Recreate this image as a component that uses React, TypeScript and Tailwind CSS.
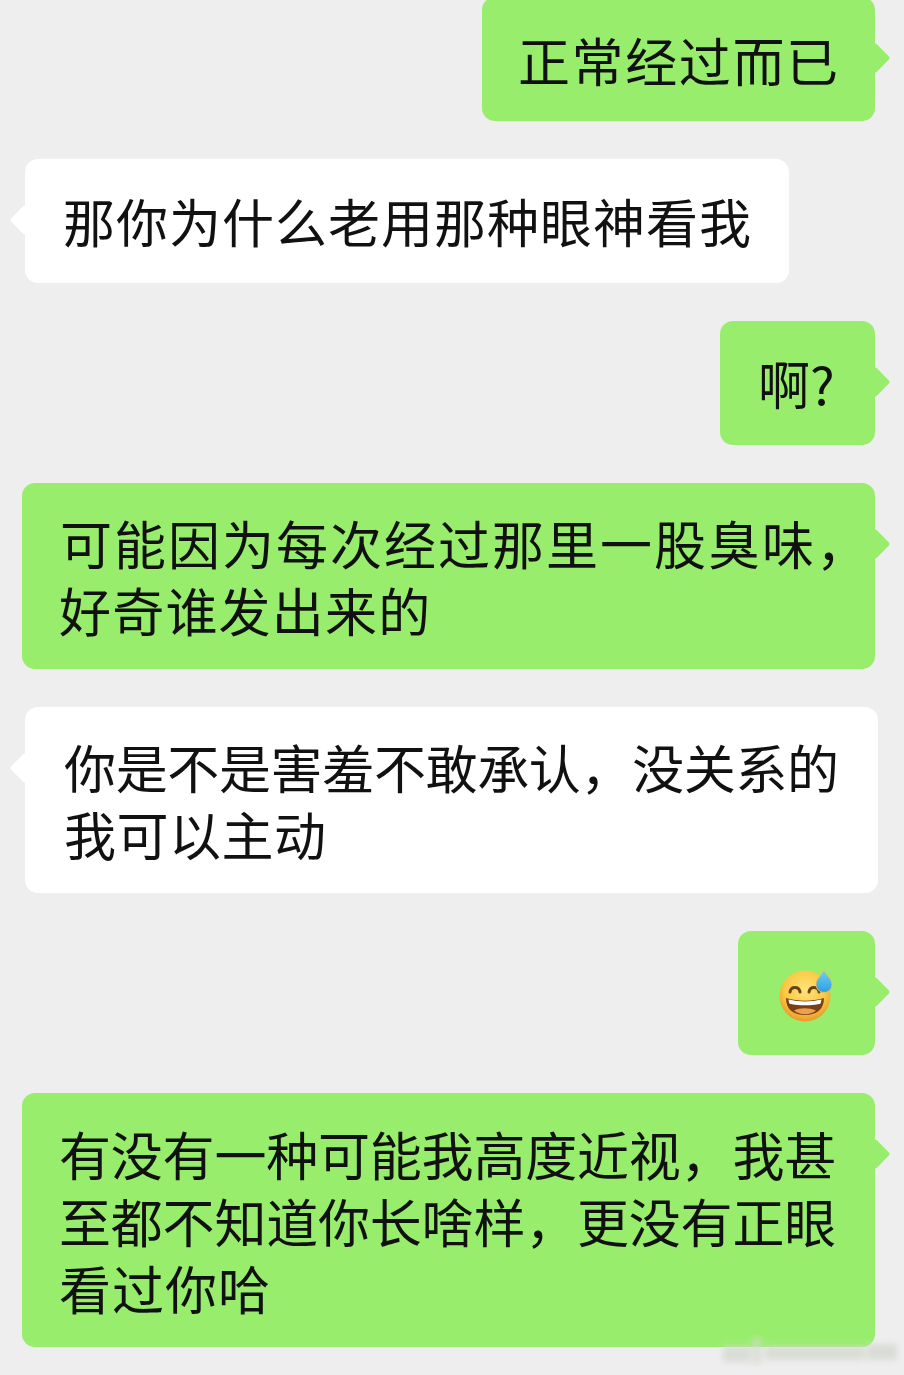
import React from "react";

type Side = "left" | "right";
type Line = { text: string; className: string };

const Bubble = ({ side, lines, children, className = "" }: { side: Side; lines?: Line[]; children?: React.ReactNode; className?: string }) => {
  const isRight = side === "right";
  return (
    <div className={`relative rounded-[13px] ${isRight ? "self-end mr-[29px] bg-[#98ee6c]" : "ml-[25px] bg-white"} ${className}`}>
      <div
        className={`absolute top-[50px] w-[22px] h-[22px] rotate-45 rounded-[3px] ${isRight ? "right-[-11px] bg-[#98ee6c]" : "left-[-11px] bg-white"}`}
      />
      {lines ? (
        <div className="relative whitespace-nowrap">
          {lines.map((line) => (
            <div key={line.text} className={`h-[67px] text-[52px] leading-[67px] ${line.className}`}>
              {line.text}
            </div>
          ))}
        </div>
      ) : (
        children
      )}
    </div>
  );
};

const SweatEmoji = () => (
  <svg width="56" height="56" viewBox="0 0 56 56">
    <defs>
      <radialGradient id="face" cx="50%" cy="38%" r="62%">
        <stop offset="0%" stopColor="#fde37a" />
        <stop offset="65%" stopColor="#fbc943" />
        <stop offset="100%" stopColor="#e8992a" />
      </radialGradient>
      <linearGradient id="drop" x1="0" y1="0" x2="0" y2="1">
        <stop offset="0%" stopColor="#6fd0f5" />
        <stop offset="100%" stopColor="#2f9ee0" />
      </linearGradient>
    </defs>
    <circle cx="26" cy="29" r="25.5" fill="url(#face)" />
    <path d="M11 25c1-6 9-6 10 0" fill="none" stroke="#6b4313" strokeWidth="3" strokeLinecap="round" />
    <path d="M30 25c1-6 9-6 10 0" fill="none" stroke="#6b4313" strokeWidth="3" strokeLinecap="round" />
    <path d="M7 31c12 3.500 26 3.500 38 0 0 12-8 17-19 17S7 43 7 31z" fill="#7b3f16" />
    <path d="M9.500 32.500c10.500 2.500 22.500 2.500 33 0-.3 2-.7 3.200-1.200 4.200-10 2.200-20.500 2.200-30.600 0-.6-1-1-2.200-1.200-4.200z" fill="#fff" />
    <path d="M15 43.500c6-3 15-3 22 0-3 2.500-7 3.800-11 3.800s-8-1.300-11-3.800z" fill="#e9a24f" />
    <path d="M45 3c3 6 8 9 8 14.500a8 8 0 0 1-16 0C37 12 42 9 45 3z" fill="url(#drop)" stroke="#f4c14a" strokeWidth="0.8" />
  </svg>
);

const App = () => {
  return (
    <div
      className="relative flex h-[1375px] w-[904px] flex-col gap-[38px] overflow-hidden bg-[#eeeeee] text-[#111111]"
      style={{ fontFamily: '"Noto Sans CJK SC", "Noto Sans", sans-serif' }}
    >
      <Bubble
        side="right"
        className="-mt-[3px] h-[124px] w-[393px] pt-[29px]"
        lines={[{ text: "正常经过而已", className: "pl-[36px] tracking-[1.6px]" }]}
      />
      <Bubble
        side="left"
        className="h-[124px] w-[764px] pt-[28px]"
        lines={[{ text: "那你为什么老用那种眼神看我", className: "pl-[38px] tracking-[1px]" }]}
      />
      <Bubble side="right" className="h-[124px] w-[155px] pt-[28px]" lines={[{ text: "啊?", className: "pl-[38px]" }]} />
      <Bubble
        side="right"
        className="h-[186px] w-[853px] pt-[26px]"
        lines={[
          { text: "可能因为每次经过那里一股臭味，", className: "pl-[38px] tracking-[2px]" },
          { text: "好奇谁发出来的", className: "pl-[37px] tracking-[1.2px]" },
        ]}
      />
      <Bubble
        side="left"
        className="h-[186px] w-[853px] pt-[26px]"
        lines={[
          { text: "你是不是害羞不敢承认，没关系的", className: "pl-[39px] tracking-[-0.35px]" },
          { text: "我可以主动", className: "pl-[39px] tracking-[0.5px]" },
        ]}
      />
      <Bubble side="right" className="h-[124px] w-[137px]">
        <div className="relative flex h-full items-center justify-center pl-[1px] pt-[4px]">
          <SweatEmoji />
        </div>
      </Bubble>
      <Bubble
        side="right"
        className="h-[254px] w-[853px] pt-[27px]"
        lines={[
          { text: "有没有一种可能我高度近视，我甚", className: "pl-[37px] tracking-[-0.2px]" },
          { text: "至都不知道你长啥样，更没有正眼", className: "pl-[37px] tracking-[-0.2px]" },
          { text: "看过你哈", className: "pl-[37px] tracking-[1px]" },
        ]}
      />

      {/* faint watermark in the corner */}
      <svg className="absolute left-[715px] top-[1330px]" width="189" height="45" viewBox="0 0 189 45">
        <defs>
          <filter id="soft">
            <feGaussianBlur stdDeviation="3" />
          </filter>
        </defs>
        <g filter="url(#soft)" fill="#d4d8d0" opacity="0.8">
          <rect x="8" y="16" width="28" height="16" />
          <rect x="38" y="8" width="8" height="26" />
          <rect x="50" y="16" width="100" height="14" />
          <rect x="152" y="14" width="30" height="16" />
        </g>
      </svg>
    </div>
  );
};

export default App;
